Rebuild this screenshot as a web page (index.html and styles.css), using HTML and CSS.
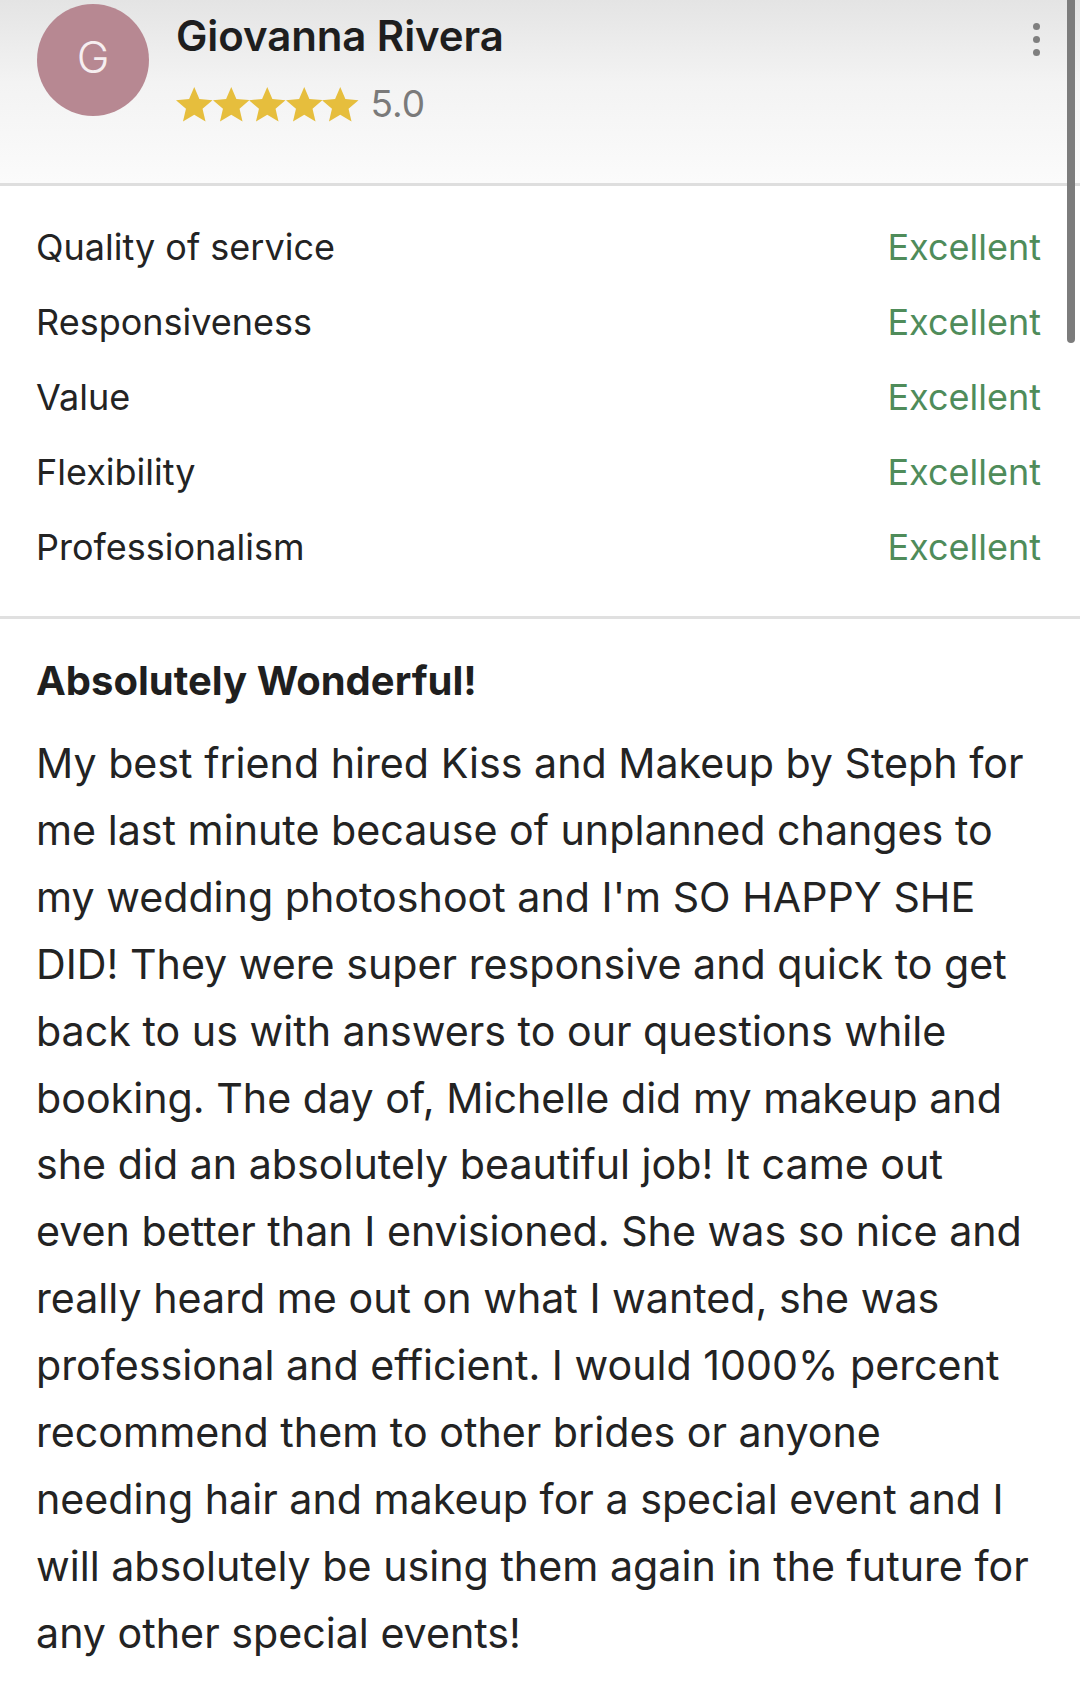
FILE: index.html
```html
<!DOCTYPE html>
<html lang="en">
<head>
<meta charset="utf-8">
<title>Review</title>
<link rel="stylesheet" href="styles.css">
</head>
<body>
<div class="page">
  <header class="review-header">
    <div class="avatar">G</div>
    <div class="reviewer">
      <div class="reviewer-name">Giovanna Rivera</div>
      <div class="rating">
        <div class="stars">
          <svg class="star" viewBox="2 1.5 20 20"><path d="M12 17.27L18.18 21l-1.64-7.03L22 9.24l-7.19-.61L12 2 9.19 8.63 2 9.24l5.46 4.73L5.82 21z"/></svg>
          <svg class="star" viewBox="2 1.5 20 20"><path d="M12 17.27L18.18 21l-1.64-7.03L22 9.24l-7.19-.61L12 2 9.19 8.63 2 9.24l5.46 4.73L5.82 21z"/></svg>
          <svg class="star" viewBox="2 1.5 20 20"><path d="M12 17.27L18.18 21l-1.64-7.03L22 9.24l-7.19-.61L12 2 9.19 8.63 2 9.24l5.46 4.73L5.82 21z"/></svg>
          <svg class="star" viewBox="2 1.5 20 20"><path d="M12 17.27L18.18 21l-1.64-7.03L22 9.24l-7.19-.61L12 2 9.19 8.63 2 9.24l5.46 4.73L5.82 21z"/></svg>
          <svg class="star" viewBox="2 1.5 20 20"><path d="M12 17.27L18.18 21l-1.64-7.03L22 9.24l-7.19-.61L12 2 9.19 8.63 2 9.24l5.46 4.73L5.82 21z"/></svg>
        </div>
        <span class="rating-value">5.0</span>
      </div>
    </div>
    <div class="menu" aria-label="More options">
      <span class="dot"></span><span class="dot"></span><span class="dot"></span>
    </div>
  </header>

  <section class="scores">
    <div class="score-row"><span class="score-label">Quality of service</span><span class="score-value">Excellent</span></div>
    <div class="score-row"><span class="score-label">Responsiveness</span><span class="score-value">Excellent</span></div>
    <div class="score-row"><span class="score-label">Value</span><span class="score-value">Excellent</span></div>
    <div class="score-row"><span class="score-label">Flexibility</span><span class="score-value">Excellent</span></div>
    <div class="score-row"><span class="score-label">Professionalism</span><span class="score-value">Excellent</span></div>
  </section>

  <section class="review-body">
    <h2 class="review-title">Absolutely Wonderful!</h2>
    <p class="review-text">My best friend hired Kiss and Makeup by Steph for<br>me last minute because of unplanned changes to<br>my wedding photoshoot and I'm SO HAPPY SHE<br>DID! They were super responsive and quick to get<br>back to us with answers to our questions while<br>booking. The day of, Michelle did my makeup and<br>she did an absolutely beautiful job! It came out<br>even better than I envisioned. She was so nice and<br>really heard me out on what I wanted, she was<br>professional and efficient. I would 1000% percent<br>recommend them to other brides or anyone<br>needing hair and makeup for a special event and I<br>will absolutely be using them again in the future for<br>any other special events!</p>
  </section>

  <div class="scrollbar"></div>
</div>
</body>
</html>
```
FILE: styles.css
```css
* { box-sizing: border-box; }

html, body {
  margin: 0;
  padding: 0;
  background: #ffffff;
}

body {
  font-family: "Inter", "Noto Sans", sans-serif;
  color: #222222;
}

.page {
  position: relative;
  width: 1080px;
  min-height: 1702px;
  background: #ffffff;
}

/* ---------- header ---------- */
.review-header {
  display: flex;
  align-items: flex-start;
  height: 186px;
  padding: 4px 0 0 37px;
  background: linear-gradient(to bottom, #e4e4e4 0%, #f3f3f3 45%, #fbfbfb 100%);
  border-bottom: 3px solid #dedede;
}

.avatar {
  flex: none;
  width: 112px;
  height: 112px;
  border-radius: 50%;
  background: #b78892;
  color: #f6eef0;
  display: flex;
  align-items: center;
  justify-content: center;
  font-size: 44px;
  font-weight: 300;
  padding-bottom: 6px;
}

.reviewer {
  margin-left: 27px;
  margin-top: 8px;
}

.reviewer-name {
  font-size: 42px;
  line-height: 48px;
  font-weight: 600;
  color: #1e1e1e;
  letter-spacing: -0.1px;
}

.rating {
  display: flex;
  align-items: center;
  height: 38px;
  margin-top: 25px;
}

.stars {
  display: flex;
}

.star {
  width: 36.5px;
  height: 36.5px;
  fill: #e6be3d;
}

.rating-value {
  margin-left: 12px;
  font-size: 37px;
  line-height: 38px;
  color: #7a7a7a;
}

.menu {
  margin-left: auto;
  margin-right: 40px;
  margin-top: 19px;
  display: flex;
  flex-direction: column;
  gap: 6px;
}

.dot {
  width: 7px;
  height: 7px;
  border-radius: 50%;
  background: #7f7f7f;
}

/* ---------- scores ---------- */
.scores {
  padding: 24px 39px 31px 36px;
  border-bottom: 3px solid #e0e0e0;
}

.score-row {
  display: flex;
  justify-content: space-between;
  height: 75px;
  line-height: 75px;
  font-size: 36px;
}

.score-label {
  color: #232323;
}

.score-value {
  color: #4f8c5a;
}

/* ---------- review body ---------- */
.review-body {
  padding: 38px 30px 0 36px;
}

.review-title {
  margin: 0;
  font-size: 40px;
  line-height: 48px;
  font-weight: 700;
  color: #1f1f1f;
}

.review-text {
  margin: 25px 0 0 0;
  font-size: 41.2px;
  line-height: 66.9px;
  color: #232323;
  white-space: nowrap;
}

/* overlay scrollbar */
.scrollbar {
  position: absolute;
  top: 0;
  right: 5px;
  width: 8px;
  height: 343px;
  border-radius: 0 0 4px 4px;
  background: #7c7c7c;
}
```
